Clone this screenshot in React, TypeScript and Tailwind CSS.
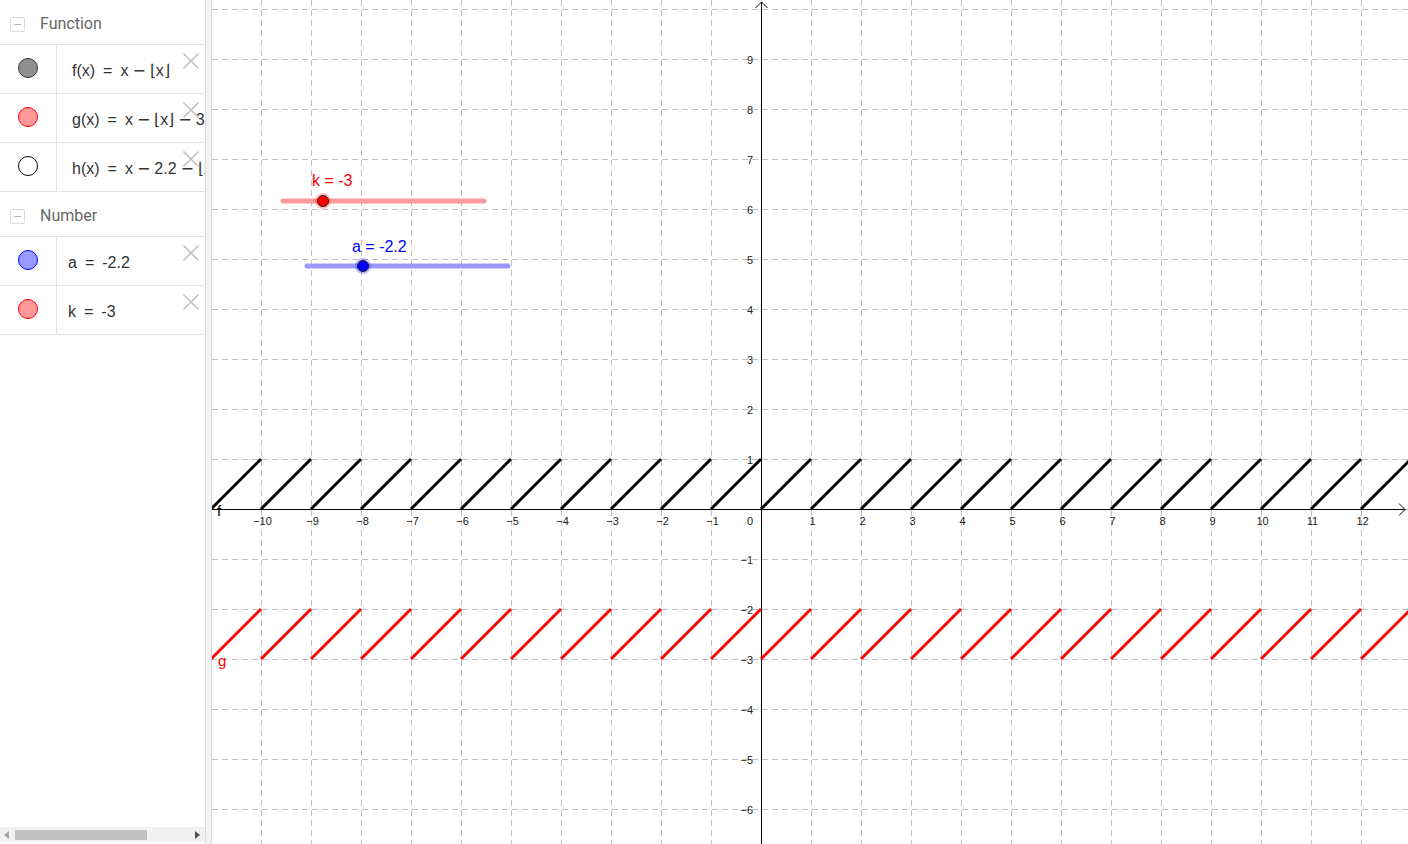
import React from "react";

const OX = 761;
const OY = 509;
const U = 50;
const L = 212;
const R = 1408;
const H = 844;
const sx = (x: number) => OX + x * U;
const sy = (y: number) => OY - y * U;
const fmt = (n: number) => (n < 0 ? "\u2212" + Math.abs(n) : String(n));

function Graph() {
  const vx: number[] = [];
  for (let k = -11; k <= 13; k++) {
    const x = sx(k);
    if (x >= L && x <= R) vx.push(x);
  }
  const hy: number[] = [];
  for (let k = -7; k <= 11; k++) {
    const y = sy(k);
    if (y >= 0 && y <= H) hy.push(y);
  }
  const segs: number[] = [];
  for (let n = -12; n <= 13; n++) segs.push(n);
  const xl: number[] = [];
  for (let k = -10; k <= 12; k++) if (k !== 0) xl.push(k);
  const yl: number[] = [];
  for (let k = -6; k <= 9; k++) if (k !== 0) yl.push(k);
  const lab = { fontFamily: '"Liberation Sans", Arial, sans-serif' };

  return (
    <svg
      width={R - L}
      height={H}
      viewBox={`${L} 0 ${R - L} ${H}`}
      className="block"
    >
      <rect x={L} y={0} width={R - L} height={H} fill="#ffffff" />
      <g stroke="#c0c0c0" strokeWidth={1} strokeDasharray="6,4" shapeRendering="crispEdges">
        {vx.map((x) => (
          <line key={"v" + x} x1={x + 0.5} y1={0} x2={x + 0.5} y2={H} />
        ))}
        {hy.map((y) => (
          <line key={"h" + y} x1={L} y1={y + 0.5} x2={R} y2={y + 0.5} />
        ))}
      </g>
      {/* axes */}
      <g stroke="#000" strokeWidth={1} fill="none">
        <line x1={L} y1={OY + 0.5} x2={R - 3} y2={OY + 0.5} shapeRendering="crispEdges" />
        <polyline points={`${R - 9},${OY - 5.5} ${R - 3},${OY + 0.5} ${R - 9},${OY + 6.5}`} />
        <line x1={OX + 0.5} y1={2} x2={OX + 0.5} y2={H} shapeRendering="crispEdges" />
        <polyline points={`${OX - 5.5},${8} ${OX + 0.5},${2} ${OX + 6.5},${8}`} />
      </g>
      {/* axis labels */}
      <g fontSize={11} fill="#222" style={lab}>
        {xl.map((k) => (
          <text key={"xl" + k} x={sx(k) + 1.5} y={525} textAnchor="middle">
            {fmt(k)}
          </text>
        ))}
        <text x={753} y={525} textAnchor="end">0</text>
        {yl.map((k) => (
          <text key={"yl" + k} x={753} y={sy(k) + 4.5} textAnchor="end">
            {fmt(k)}
          </text>
        ))}
      </g>
      {/* functions */}
      <g strokeWidth={3} fill="none">
        {segs.map((n) => (
          <line
            key={"f" + n}
            x1={sx(n)}
            y1={sy(0)}
            x2={sx(n + 1)}
            y2={sy(1)}
            stroke="#000"
          />
        ))}
        {segs.map((n) => (
          <line
            key={"g" + n}
            x1={sx(n)}
            y1={sy(-3)}
            x2={sx(n + 1)}
            y2={sy(-2)}
            stroke="#ff0000"
          />
        ))}
      </g>
      <text x={217} y={516} fontSize={15} fill="#000" style={lab}>f</text>
      <text x={218} y={666} fontSize={15} fill="#ff0000" style={lab}>g</text>
      {/* slider k */}
      <line x1={283} y1={201} x2={484} y2={201} stroke="#ff9999" strokeWidth={5} strokeLinecap="round" />
      <circle cx={323} cy={201} r={8} fill="#ff0000" fillOpacity={0.25} />
      <circle cx={323} cy={201} r={5.5} fill="#ff0000" stroke="#222" strokeWidth={1} />
      <text x={312} y={186} fontSize={16} fill="#ff0000" style={lab}>k = -3</text>
      {/* slider a */}
      <line x1={307} y1={266} x2={508} y2={266} stroke="#9999ff" strokeWidth={5} strokeLinecap="round" />
      <circle cx={363} cy={266} r={8} fill="#0000ff" fillOpacity={0.25} />
      <circle cx={363} cy={266} r={5.5} fill="#0000ff" stroke="#222" strokeWidth={1} />
      <text x={352} y={252} fontSize={16} fill="#0000ff" style={lab}>a = -2.2</text>
    </svg>
  );
}

function MinusBox() {
  return (
    <div className="w-[15px] h-[15px] border border-[#dddddd] rounded-[2px] flex items-center justify-center bg-white">
      <div className="w-[7px] h-[1px] bg-[#b5b5b5]" />
    </div>
  );
}

function CloseX() {
  return (
    <svg width="18" height="18" viewBox="0 0 18 18" className="absolute right-[5px] top-[7px]">
      <path d="M1.5 1.5 L16.5 16.5 M16.5 1.5 L1.5 16.5" stroke="#c0c0c0" strokeWidth="1.6" fill="none" />
    </svg>
  );
}

function Header({ label, h }: { label: string; h: string }) {
  return (
    <div className={`${h} flex items-center border-b border-[#e3e3e3] pt-[4px]`}>
      <div className="ml-[10px]">
        <MinusBox />
      </div>
      <span className="ml-[15px] text-[16px] text-[#666666]" style={{ fontFamily: 'Roboto, "Open Sans", sans-serif' }}>
        {label}
      </span>
    </div>
  );
}

function Row({
  dot,
  children,
  pl,
}: {
  dot: string;
  children: React.ReactNode;
  pl: string;
}) {
  return (
    <div className="relative h-[49px] flex border-b border-[#e3e3e3]">
      <div className="w-[57px] shrink-0 border-r border-[#e3e3e3] flex items-center justify-center">
        <div className={`w-[20px] h-[20px] rounded-full border ${dot} -mt-[2px]`} />
      </div>
      <div
        className={`flex-1 flex items-center ${pl} pt-[4px] whitespace-nowrap overflow-hidden text-[16px] text-[#333333]`}
        style={{ fontFamily: '"Liberation Sans", Arial, sans-serif' }}
      >
        {children}
      </div>
      <CloseX />
    </div>
  );
}

const Eq = () => <span className="mx-[8px]">=</span>;
const Mi = () => (
  <span className="mx-[4px]" style={{ fontFamily: '"DejaVu Sans", sans-serif' }}>
    {"\u2212"}
  </span>
);

function Scrollbar() {
  return (
    <div className="mt-auto mb-[2px] h-[15px] bg-[#f1f1f1] flex items-center relative">
      <svg width="5" height="8" viewBox="0 0 5 8" className="ml-[4px]">
        <path d="M5 0 L0 4 L5 8 Z" fill="#a3a3a3" />
      </svg>
      <div className="ml-[6px] w-[132px] h-[10px] bg-[#c1c1c1]" />
      <div className="flex-1" />
      <svg width="5" height="8" viewBox="0 0 5 8" className="mr-[5px]">
        <path d="M0 0 L5 4 L0 8 Z" fill="#505050" />
      </svg>
    </div>
  );
}

export default function App() {
  return (
    <div className="w-[1408px] h-[844px] flex bg-white overflow-hidden">
      <div className="w-[205px] h-[844px] shrink-0 flex flex-col bg-white overflow-hidden">
        <Header label="Function" h="h-[45px]" />
        <Row dot="bg-[#8f8f8f] border-[#333333]" pl="pl-[15px]">
          <span>f(x)</span>
          <Eq />
          <span>x</span>
          <Mi />
          <span>{"\u230Ax\u230B"}</span>
        </Row>
        <Row dot="bg-[#ff9a9a] border-[#ff0000]" pl="pl-[15px]">
          <span>g(x)</span>
          <Eq />
          <span>x</span>
          <Mi />
          <span>{"\u230Ax\u230B"}</span>
          <Mi />
          <span>3</span>
        </Row>
        <Row dot="bg-white border-[#000000]" pl="pl-[15px]">
          <span>h(x)</span>
          <Eq />
          <span>x</span>
          <Mi />
          <span>2.2</span>
          <Mi />
          <span>{"\u230Ax"}</span>
        </Row>
        <Header label="Number" h="h-[45px]" />
        <Row dot="bg-[#9a9aff] border-[#0000ff]" pl="pl-[11px]">
          <span>a</span>
          <Eq />
          <span>-2.2</span>
        </Row>
        <Row dot="bg-[#ff9a9a] border-[#ff0000]" pl="pl-[11px]">
          <span>k</span>
          <Eq />
          <span>-3</span>
        </Row>
        <Scrollbar />
      </div>
      <div className="w-[7px] h-[844px] shrink-0 bg-[#f3f3f3] border-l border-r border-[#dadada]" />
      <div className="flex-1 h-[844px]">
        <Graph />
      </div>
    </div>
  );
}
